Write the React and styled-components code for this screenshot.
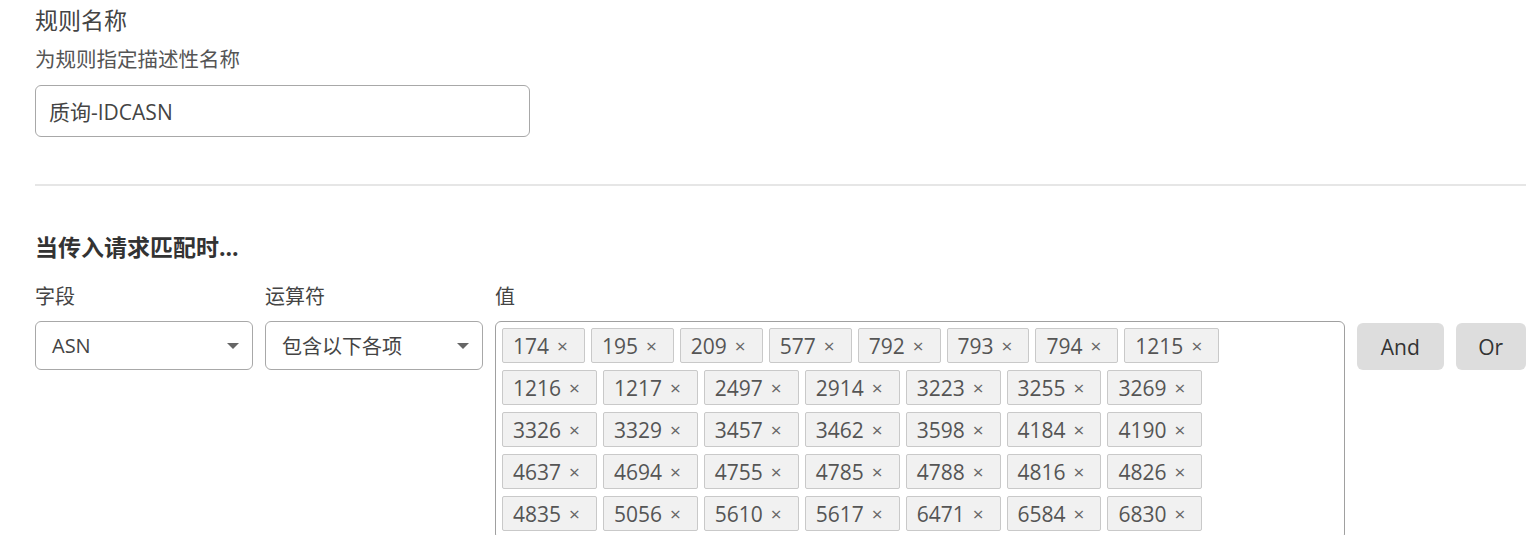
import React from "react";
import styled, { createGlobalStyle } from "styled-components";

const Global = createGlobalStyle`
  html, body { margin: 0; padding: 0; background: #fff; }
  body {
    font-family: "Open Sans", "Noto Sans CJK SC", sans-serif;
    color: #444;
    -webkit-font-smoothing: antialiased;
  }
  * { box-sizing: border-box; }
`;

const Page = styled.div`
  padding: 5px 10px 0 35px;
  overflow: hidden;
  height: 535px;
`;

const Title = styled.div`
  font-size: 23px;
  line-height: 31px;
  color: #444;
`;

const Hint = styled.div`
  margin-top: 9px;
  font-size: 20.5px;
  line-height: 28px;
  color: #555;
`;

const TextInput = styled.div`
  margin-top: 12px;
  width: 495px;
  height: 52px;
  border: 1px solid #a8a8a8;
  border-radius: 6px;
  padding: 0 13px;
  display: flex;
  align-items: center;
  font-size: 21px;
  color: #444;
`;

const Divider = styled.hr`
  margin: 47px 0 0;
  border: none;
  border-top: 2px solid #e6e6e6;
`;

const Heading = styled.div`
  margin-top: 46px;
  font-size: 23px;
  line-height: 30px;
  font-weight: 700;
  color: #333;
`;

const Grid = styled.div`
  margin-top: 21px;
  display: grid;
  grid-template-columns: 218px 218px 850px auto auto;
  column-gap: 12px;
  row-gap: 10px;
  align-items: start;
`;

const Label = styled.div`
  font-size: 20px;
  line-height: 28px;
  color: #444;
`;

const Select = styled.div`
  height: 49px;
  border: 1px solid #a8a8a8;
  border-radius: 6px;
  padding: 0 12px 0 16px;
  display: flex;
  align-items: center;
  justify-content: space-between;
  font-size: 20px;
  color: #444;
`;

const Caret = styled.span`
  width: 0;
  height: 0;
  border-left: 6px solid transparent;
  border-right: 6px solid transparent;
  border-top: 6px solid #666;
  margin-right: 1px;
`;

const ValueBox = styled.div`
  border: 1px solid #a0a0a0;
  border-radius: 6px;
  padding: 6px 6px 8px;
`;

const TagList = styled.div`
  display: flex;
  flex-wrap: wrap;
  gap: 7px 6px;
  max-width: 760px;
`;

const Tag = styled.span`
  height: 35px;
  display: inline-flex;
  align-items: center;
  padding: 0 16px 0 10px;
  background: #f1f1f1;
  border: 1px solid #c9c9c9;
  border-radius: 2px;
  font-size: 21px;
  color: #555;
`;

const Remove = styled.span`
  margin-left: 8px;
  font-size: 19px;
  color: #666;
`;

const LogicButton = styled.button`
  margin-top: 2px;
  height: 47px;
  min-width: ${(p) => p.$w}px;
  border: none;
  border-radius: 6px;
  background: #dddddd;
  font-family: "Open Sans", sans-serif;
  font-size: 21px;
  color: #333;
  padding: 0 16px;
`;

const values = [
  174, 195, 209, 577, 792, 793, 794, 1215,
  1216, 1217, 2497, 2914, 3223, 3255, 3269,
  3326, 3329, 3457, 3462, 3598, 4184, 4190,
  4637, 4694, 4755, 4785, 4788, 4816, 4826,
  4835, 5056, 5610, 5617, 6471, 6584, 6830,
];

export default function App() {
  return (
    <>
      <Global />
      <Page>
        <Title>规则名称</Title>
        <Hint>为规则指定描述性名称</Hint>
        <TextInput>质询-IDCASN</TextInput>
        <Divider />
        <Heading>当传入请求匹配时...</Heading>
        <Grid>
          <Label>字段</Label>
          <Label>运算符</Label>
          <Label>值</Label>
          <span />
          <span />
          <Select>
            ASN
            <Caret />
          </Select>
          <Select>
            包含以下各项
            <Caret />
          </Select>
          <ValueBox>
            <TagList>
              {values.map((v) => (
                <Tag key={v}>
                  {v}
                  <Remove>×</Remove>
                </Tag>
              ))}
            </TagList>
          </ValueBox>
          <LogicButton $w={86}>And</LogicButton>
          <LogicButton $w={70}>Or</LogicButton>
        </Grid>
      </Page>
    </>
  );
}
